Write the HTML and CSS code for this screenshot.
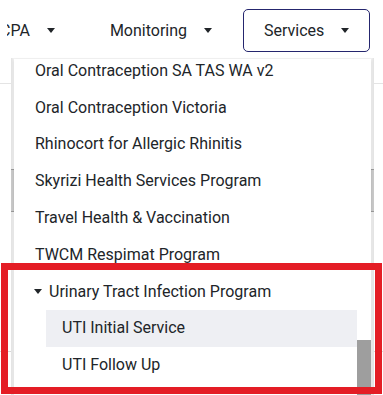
FILE: index.html
```html
<!DOCTYPE html>
<html lang="en">
<head>
  <meta charset="UTF-8" />
  <title>Services menu</title>
  <link rel="stylesheet" href="styles.css">
</head>
<body>
  <nav class="topnav">
    <div class="nav-item cut">CPA <span class="caret"></span></div>
    <div class="nav-item">Monitoring <span class="caret"></span></div>
    <div class="nav-item active">Services <span class="caret"></span></div>
  </nav>

  <div class="page">
    <div class="page-head"></div>
    <div class="page-row"></div>
  </div>

  <!-- Services dropdown -->
  <div class="dropdown">
    <div class="dropdown-panel">
      <ul class="menu">
        <li class="menu-item">Oral Contraception SA TAS WA v2</li>
        <li class="menu-item">Oral Contraception Victoria</li>
        <li class="menu-item">Rhinocort for Allergic Rhinitis</li>
        <li class="menu-item">Skyrizi Health Services Program</li>
        <li class="menu-item">Travel Health &amp; Vaccination</li>
        <li class="menu-item">TWCM Respimat Program</li>
        <li class="menu-item group"><span class="caret"></span>Urinary Tract Infection Program</li>
        <li>
          <ul class="submenu">
            <li class="menu-item hover">UTI Initial Service</li>
            <li class="menu-item">UTI Follow Up</li>
          </ul>
        </li>
      </ul>
      <div class="scroll-thumb"></div>
    </div>
  </div>

  <div class="highlight"></div>
</body>
</html>
```

FILE: styles.css
```css
/* Base Reset */
* {
  margin: 0;
  padding: 0;
  box-sizing: border-box;
}

body {
  font-family: Roboto, 'Liberation Sans', sans-serif;
  font-size: 16px;
  color: #212529;
  background: #fff;
  width: 383px;
  height: 395px;
  overflow: hidden;
  position: relative;
}

ul {
  list-style: none;
}

/* Top nav (scrolled sideways, clipped at the left) */
.topnav {
  display: flex;
  align-items: center;
  gap: 11px;
  height: 60px;
  padding-top: 1px;
  margin-left: 7px;
  overflow: hidden;
}

.nav-item {
  display: flex;
  flex-shrink: 0;
  align-items: center;
  height: 43px;
  padding: 0 20px;
  line-height: 24px;
  white-space: nowrap;
}

.nav-item.cut {
  margin-left: -27px;
  padding-right: 24px;
}

.nav-item.active {
  border: 1px solid #25266e;
  border-radius: 5px;
}

.caret {
  display: inline-block;
  width: 0;
  height: 0;
  margin-left: 17px;
  border-top: 5px solid #212529;
  border-left: 4.5px solid transparent;
  border-right: 4.5px solid transparent;
}

/* Page behind the menu */
.page-head {
  height: 24px;
  border-bottom: 1px solid #e4e4e4;
}

.page-row {
  height: 268px;
  border-bottom: 1px solid #d8d8d8;
}

/* Dropdown */
.dropdown {
  position: absolute;
  top: 58px;
  left: 11px;
  width: 363px;
  height: 337px;
  padding: 1px 3px 0;
  background: linear-gradient(to right, #e2e2e2, #f4f4f4 3px, #f4f4f4 360px, #e2e2e2);
}

.dropdown::before {
  content: '';
  position: absolute;
  top: 111px;
  left: 0;
  right: 0;
  height: 41px;
  background: #c9c9c9;
  border-top: 1px solid #9a9a9a;
  border-bottom: 1px solid #9a9a9a;
}

.dropdown-panel {
  position: relative;
  z-index: 1;
  height: 100%;
  background: #fff;
  overflow: hidden;
  box-shadow: 0 1px 3px rgba(0, 0, 0, 0.12);
}

.menu {
  margin-top: -6.5px;
  width: 343px;
}

.menu-item {
  padding: 6.4px 21px;
  line-height: 24px;
  white-space: nowrap;
}

.menu-item.group {
  display: flex;
  align-items: center;
  padding-left: 20px;
}

.menu-item.group .caret {
  margin: 0 7px 0 0;
}

.submenu {
  margin-left: 32px;
}

.submenu .menu-item {
  padding-left: 16px;
}

.menu-item.hover {
  background: #eeeff3;
}

.scroll-thumb {
  position: absolute;
  top: 281px;
  left: 343px;
  width: 14px;
  height: 56px;
  background: #9e9e9e;
}

/* Red callout */
.highlight {
  position: absolute;
  top: 263px;
  left: 1px;
  width: 381px;
  height: 131px;
  border: 7px solid #e41d25;
  z-index: 2;
}
```
